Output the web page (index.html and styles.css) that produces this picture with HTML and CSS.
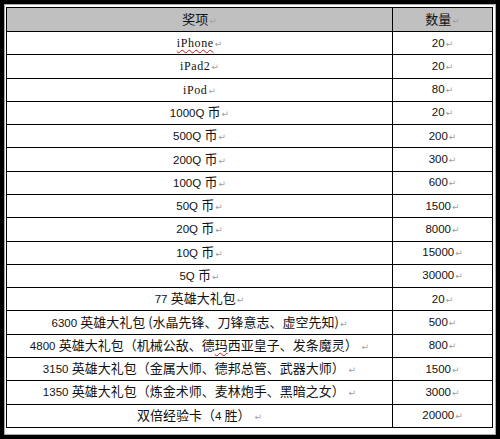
FILE: index.html
```html
<!DOCTYPE html>
<html lang="zh-CN">
<head>
<meta charset="utf-8">
<title>奖项</title>
<link rel="stylesheet" href="styles.css">
</head>
<body>
<div class="frame">
  <div class="inner">
    <table class="prizes">
      <colgroup><col class="c1"><col class="c2"></colgroup>
      <thead>
        <tr><th class="zh">奖项<span class="pm">↵</span></th><th class="zh">数量<span class="pm">↵</span></th></tr>
      </thead>
      <tbody>
        <tr><td><span class="lat spell">iPhone</span><span class="pm">↵</span></td><td class="num">20<span class="pm">↵</span></td></tr>
        <tr><td><span class="lat">iPad2</span><span class="pm">↵</span></td><td class="num">20<span class="pm">↵</span></td></tr>
        <tr><td><span class="lat">iPod</span><span class="pm">↵</span></td><td class="num">80<span class="pm">↵</span></td></tr>
        <tr><td><span class="num">1000Q </span><span class="zh">币</span><span class="pm">↵</span></td><td class="num">20<span class="pm">↵</span></td></tr>
        <tr><td><span class="num">500Q </span><span class="zh">币</span><span class="pm">↵</span></td><td class="num">200<span class="pm">↵</span></td></tr>
        <tr><td><span class="num">200Q </span><span class="zh">币</span><span class="pm">↵</span></td><td class="num">300<span class="pm">↵</span></td></tr>
        <tr><td><span class="num">100Q </span><span class="zh">币</span><span class="pm">↵</span></td><td class="num">600<span class="pm">↵</span></td></tr>
        <tr><td><span class="num">50Q </span><span class="zh">币</span><span class="pm">↵</span></td><td class="num">1500<span class="pm">↵</span></td></tr>
        <tr><td><span class="num">20Q </span><span class="zh">币</span><span class="pm">↵</span></td><td class="num">8000<span class="pm">↵</span></td></tr>
        <tr><td><span class="num">10Q </span><span class="zh">币</span><span class="pm">↵</span></td><td class="num">15000<span class="pm">↵</span></td></tr>
        <tr><td><span class="num">5Q </span><span class="zh">币</span><span class="pm">↵</span></td><td class="num">30000<span class="pm">↵</span></td></tr>
        <tr><td><span class="num">77 </span><span class="zh">英雄大礼包</span><span class="pm">↵</span></td><td class="num">20<span class="pm">↵</span></td></tr>
        <tr><td><span class="num">6300 </span><span class="zh">英雄大礼包 (水晶先锋、刀锋意志、虚空先知)</span><span class="pm">↵</span></td><td class="num">500<span class="pm">↵</span></td></tr>
        <tr><td><span class="num">4800 </span><span class="zh">英雄大礼包（机械公敌、德<span class="spell">玛</span>西亚皇子、发条魔灵）</span> <span class="pm">↵</span></td><td class="num">800<span class="pm">↵</span></td></tr>
        <tr><td><span class="num">3150 </span><span class="zh">英雄大礼包（金属大师、德邦总管、武器大师）</span> <span class="pm">↵</span></td><td class="num">1500<span class="pm">↵</span></td></tr>
        <tr><td><span class="num">1350 </span><span class="zh">英雄大礼包（炼金术师、麦林炮手、黑暗之女）</span> <span class="pm">↵</span></td><td class="num">3000<span class="pm">↵</span></td></tr>
        <tr><td><span class="zh">双倍经验卡（</span><span class="num">4 </span><span class="zh">胜）</span> <span class="pm">↵</span></td><td class="num">20000<span class="pm">↵</span></td></tr>
      </tbody>
    </table>
  </div>
</div>
</body>
</html>
```

FILE: styles.css
```css
html, body {
  margin: 0;
  padding: 0;
  background: #000;
}

.frame {
  width: 500px;
  height: 439px;
  box-sizing: border-box;
  border: 4px solid #000;
  background: #fff;
}

.inner {
  height: 100%;
  box-sizing: border-box;
  border: 1px solid #a8a8a8;
  padding: 2px 2px 6px 1px;
  background: #fff;
}

.prizes {
  table-layout: fixed;
  width: 487px;
  height: 421px;
  box-sizing: border-box;
  border-collapse: separate;
  border-spacing: 0;
  border: 1px solid #000;
  color: #111;
  font-family: "Noto Sans CJK SC", "Liberation Sans", sans-serif;
  font-size: 13px;
}

.c1 { width: 385px; }
.c2 { width: 100px; }

.prizes tr {
  height: 23px;
}

.prizes th,
.prizes td {
  padding: 0;
  text-align: center;
  vertical-align: middle;
  line-height: 14px;
  white-space: nowrap;
}

.prizes th {
  background: #c0c0c0;
  font-weight: normal;
}

.prizes th + th,
.prizes td + td {
  border-left: 1px solid #000;
}

.prizes tbody td {
  border-top: 1px solid #000;
}

.zh {
  font-family: "Noto Sans CJK SC", sans-serif;
  font-size: 13px;
}

.num {
  font-family: "Liberation Sans", "Noto Sans CJK SC", sans-serif;
  font-size: 11.5px;
}

.lat {
  font-family: "Liberation Serif", serif;
  font-size: 12px;
  letter-spacing: 0.6px;
}

.spell {
  text-decoration: underline wavy #d01818;
  text-decoration-thickness: 1px;
  text-underline-offset: 2px;
}

.pm {
  font-family: "DejaVu Sans", sans-serif;
  font-size: 9px;
  color: #a0a0a0;
  margin-left: 1px;
}
```
